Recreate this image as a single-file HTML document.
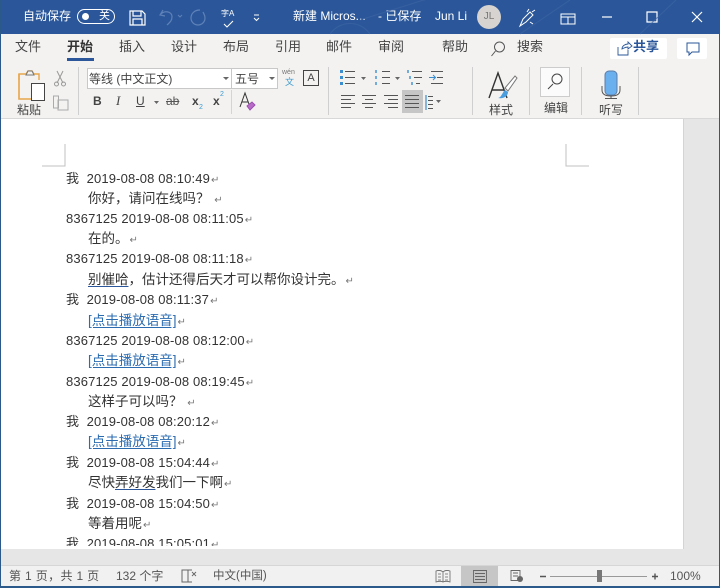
<!DOCTYPE html>
<html lang="zh"><head><meta charset="utf-8"><style>
html,body{margin:0;padding:0;width:720px;height:588px;overflow:hidden;background:#fff}
body{position:relative;font-family:"Liberation Sans","Noto Sans CJK SC",sans-serif;color:#333;filter:blur(.3px)}
.a{position:absolute;white-space:nowrap}
.t{position:absolute;white-space:nowrap;font-size:13px;line-height:16px;color:#444}
.s{font-size:12px}
.l{position:absolute;white-space:nowrap;font-size:13px;line-height:18px;color:#333}
.l i{font-style:normal;font-size:10px;color:#777;margin-left:1px}
.d{left:66px;letter-spacing:.14px}
.c{left:88px;font-size:13.5px}
.k{color:#2b6cb0;text-decoration:underline;text-underline-offset:2px}
.u{text-decoration:underline;text-decoration-color:#2b579a;text-underline-offset:2px}
.w{color:#fff;font-size:12px;line-height:16px;position:absolute;white-space:nowrap}
svg{position:absolute;left:0;top:0}
</style></head><body>
<div class="a" style="left:0;top:0;width:720px;height:34px;background:#2b579a"></div>
<div class="a" style="left:1px;top:34px;width:718px;height:26px;background:#f3f2f1"></div>
<div class="a" style="left:1px;top:60px;width:718px;height:58px;background:#f3f2f1;border-bottom:1px solid #d8d8d8"></div>
<div class="a" style="left:683px;top:119px;width:36px;height:430px;background:#e6e6e6;border-left:1px solid #d4d4d4;box-sizing:border-box"></div>
<div class="a" style="left:1px;top:549px;width:718px;height:17px;background:#e6e6e6"></div>
<div class="a" style="left:1px;top:565px;width:718px;height:21px;background:#f1f1f1;border-top:1px solid #d6d6d6;box-sizing:border-box"></div>
<div class="a" style="left:0;top:0;width:1px;height:588px;background:#2b5a8a"></div>
<div class="a" style="left:719px;top:0;width:1px;height:588px;background:#2b5a8a"></div>
<div class="a" style="left:0;top:586px;width:720px;height:2px;background:#2b5a8a"></div>

<div class="w" style="left:23px;top:8px">自动保存</div>
<div class="a" style="left:77px;top:9px;width:36px;height:13px;border:1px solid #fff;border-radius:8px;box-sizing:content-box"></div>
<div class="a" style="left:82px;top:13px;width:7px;height:7px;background:#fff;border-radius:50%"></div>
<div class="w" style="left:99px;top:8px;font-size:11px">关</div>
<div class="w" style="left:293px;top:8px">新建 Micros...</div>
<div class="w" style="left:378px;top:8px">- 已保存</div>
<div class="w" style="left:435px;top:8px">Jun Li</div>
<div class="a" style="left:477px;top:5px;width:24px;height:24px;border-radius:50%;background:#d6d3d0;color:#777;font-size:10px;line-height:24px;text-align:center">JL</div>
<div class="w" style="left:221px;top:9px;font-size:8px;line-height:9px">字A</div>

<div class="t" style="left:15px;top:39px">文件</div>
<div class="t" style="left:67px;top:39px;font-weight:bold;color:#333">开始</div>
<div class="a" style="left:67px;top:58px;width:27px;height:3px;background:#2b579a"></div>
<div class="t" style="left:119px;top:39px">插入</div>
<div class="t" style="left:171px;top:39px">设计</div>
<div class="t" style="left:223px;top:39px">布局</div>
<div class="t" style="left:275px;top:39px">引用</div>
<div class="t" style="left:326px;top:39px">邮件</div>
<div class="t" style="left:378px;top:39px">审阅</div>
<div class="t" style="left:442px;top:39px">帮助</div>
<div class="t" style="left:517px;top:39px">搜索</div>

<div class="a" style="left:610px;top:38px;width:57px;height:21px;background:#fff;border-radius:2px"></div>
<div class="t" style="left:633px;top:39px;color:#2b579a;font-weight:bold">共享</div>
<div class="a" style="left:677px;top:38px;width:30px;height:21px;background:#fff;border-radius:2px"></div>

<div class="a" style="left:87px;top:68px;width:145px;height:21px;background:#fff;border:1px solid #c8c8c8;box-sizing:border-box"></div>
<div class="a" style="left:232px;top:68px;width:46px;height:21px;background:#fff;border:1px solid #c8c8c8;border-left:0;box-sizing:border-box"></div>
<div class="t s" style="left:89px;top:71px">等线 (中文正文)</div>
<div class="t s" style="left:235px;top:71px">五号</div>
<div class="t s" style="left:17px;top:102px">粘贴</div>
<div class="t s" style="left:93px;top:93px;font-weight:bold">B</div>
<div class="t" style="left:116px;top:93px;font-style:italic;font-family:'Liberation Serif',serif">I</div>
<div class="t s" style="left:136px;top:93px;text-decoration:underline">U</div>
<div class="t s" style="left:166px;top:93px;text-decoration:line-through;color:#555">ab</div>
<div class="t s" style="left:192px;top:93px;font-weight:bold">x</div>
<div class="t" style="left:199px;top:103px;font-size:7px;color:#3a9ad0;line-height:10px">2</div>
<div class="t s" style="left:213px;top:93px;font-weight:bold">x</div>
<div class="t" style="left:220px;top:90px;font-size:7px;color:#3a9ad0;line-height:10px">2</div>
<div class="t" style="left:282px;top:69px;font-size:7px;line-height:8px;color:#777">wén</div>
<div class="t" style="left:285px;top:77px;font-size:9px;line-height:10px;color:#3a9ad0">文</div>
<div class="a" style="left:303px;top:70px;width:16px;height:16px;border:1px solid #444;box-sizing:border-box;font-size:11px;line-height:14px;text-align:center;color:#444">A</div>
<div class="a" style="left:402px;top:90px;width:21px;height:23px;background:#c6c6c6"></div>
<div class="t s" style="left:489px;top:102px">样式</div>
<div class="a" style="left:540px;top:67px;width:30px;height:30px;background:#fbfbfb;border:1px solid #ccc;box-sizing:border-box"></div>
<div class="t s" style="left:544px;top:100px">编辑</div>
<div class="t s" style="left:599px;top:102px">听写</div>

<svg width="720" height="588" viewBox="0 0 720 588" fill="none">
<!-- titlebar icons -->
<g stroke="#fff" stroke-width="1.2">
<path d="M130 11h12l3 3v11h-15z M133 11v5h8v-5 M133 25v-6h9v6"/>
<path d="M561 14h14v10h-14z M561 17h14 M568 17v7" stroke-width="1"/>
<path d="M602 17h10"/>
<path d="M647 12h10v10h-10z"/>
<path d="M692 12l10 10M702 12l-10 10"/>
<path d="M254 15h5M254 18l2.5 2.5 2.5-2.5" stroke-width="1"/>
<path d="M224 24l3 3 6-6" stroke-width="1.1"/>
<path d="M520 26l3-7 7-7 3 3-7 7z M527 12l2-3M532 12l3-2M530 22l3 2" stroke-width="1"/>
</g>
<g stroke="#5f82b8" stroke-width="1.2">
<path d="M163 10l-3 5 5 1M160 15c4-5 12-4 12 2 0 4-3 6-5 8"/>
<path d="M178 15l2 2 2-2" stroke-width="1"/>
<path d="M200 10c-6 0-9 4-9 8a7 7 0 1 0 14 0c0-3-1-4-2-6"/>
</g>
<g stroke="#3d64a3" stroke-width="1" opacity=".7">
<path d="M360 20l70-22M520 34l50-34M640 34l36-34M330 34c10-14 30-14 40 0"/>
</g>
<!-- clipboard -->
<path d="M19 80V74h7l2-3h4l2 3h5v6" stroke="#e8a64a" stroke-width="1.4"/>
<path d="M19 74v25h12" stroke="#e8a64a" stroke-width="1.6"/>
<path d="M26 75l2-4h4l2 4z" stroke="#777" fill="#f3f2f1"/>
<rect x="31.500" y="83.500" width="13" height="17" fill="#fff" stroke="#444"/>
<path d="M57 71l6 12M63 71l-6 12" stroke="#999"/>
<circle cx="56.500" cy="84" r="2" stroke="#999"/><circle cx="63.500" cy="84" r="2" stroke="#999"/>
<path d="M53.500 96h5v12h-5z M58 100h10v10H58z" stroke="#aaa" fill="#f3f2f1"/>
<path d="M78.500 67v48M328.500 67v48M472.500 67v48M529.500 67v48M581.500 67v48M638.500 67v48" stroke="#cfcfcf"/>
<path d="M231.500 90v24" stroke="#d4d4d4"/>
<path d="M223 77l3 3 3-3M269 77l3 3 3-3M154 101l2.500 3 2.500-3M361 77l2.500 3 2.500-3M395 77l2.500 3 2.500-3M436 100l2.500 3 2.500-3" fill="#666"/>
<path d="M240 107l5-14 5 14M242 102h6" stroke="#333" stroke-width="1"/>
<path d="M247 106l5-4 3 3-5 5z" fill="#b86cc8" stroke="#9a4fb0"/>
<!-- lists -->
<g fill="#3a8ed0"><rect x="340" y="70" width="3" height="3"/><rect x="340" y="76" width="3" height="3"/><rect x="340" y="82" width="3" height="3"/></g>
<path d="M345 71.500h10M345 77.500h10M345 83.500h10M382 71.500h8M382 77.500h8M382 83.500h8M412 71.500h10M414 77.500h8M416 83.500h4M431 71.500h12M437 77.500h6M431 83.500h12" stroke="#555"/>
<path d="M376 70v3M376 76v3M376 82v3M408 70v3M410 76v3M412 82v3" stroke="#3a8ed0" stroke-width="1.4"/>
<path d="M429 77.500h6M433 75l2.500 2.500-2.500 2.500" stroke="#3a8ed0"/>
<path d="M341 95.500h14M341 99.500h10M341 103.500h14M341 107.500h10M362 95.500h14M365 99.500h8M362 103.500h14M365 107.500h8M384 95.500h14M388 99.500h10M384 103.500h14M388 107.500h10M405 95.500h14M405 99.500h14M405 103.500h14M405 107.500h14" stroke="#555" stroke-width="1.1"/>
<path d="M426 95v15" stroke="#3a8ed0" stroke-width="1.2"/><path d="M428 96.500h5M428 100.500h5M428 104.500h5M428 108.500h5" stroke="#555"/>
<!-- styles -->
<path d="M489 98l9-25 9 25M492 90h12" stroke="#333" stroke-width="1.4"/>
<path d="M505 88l10-12 2 2-9 13z" stroke="#777" fill="#fff"/>
<path d="M498 98c3 0 4-5 7-8l3 2c0 4-4 7-10 6z" fill="#4a9ede"/>
<!-- editing -->
<circle cx="557" cy="79" r="5" stroke="#444" fill="#fbfbfb"/><path d="M553 84l-5 5" stroke="#444"/>
<!-- dictate -->
<rect x="605" y="71" width="12" height="24" rx="4" fill="#6ab0ee" stroke="#5c7da8"/>
<path d="M602 86v4c0 4 3 6 9 6s9-2 9-6v-4M611 96v2M605 98.500h12" stroke="#555" stroke-width="1"/>
<!-- search -->
<circle cx="499.500" cy="47" r="5" stroke="#555"/><path d="M495.500 51l-4 5" stroke="#555"/>
<!-- share -->
<path d="M618 47v8h10v-5M622 49c0-3 3-5 6-5v-2l4 4-4 3v-2c-3 0-4 1-6 2z" stroke="#2b579a" stroke-width=".9"/>
<path d="M687 43h12v9h-7l-3 3v-3h-2z" stroke="#2b579a"/>
<!-- crop marks -->
<path d="M65 144v22H42M566 144v22h23" stroke="#c0c0c0"/>
<!-- status -->
<path d="M182 570h6v12h-6zM188 570h4M188 582h4" stroke="#666"/><path d="M192 572l4 4M196 572l-4 4" stroke="#666" stroke-width=".9"/>
<rect x="461" y="566" width="37" height="20" fill="#c6c6c6"/>
<path d="M436 571c3-1 5-1 7 1 2-2 4-2 7-1v11c-3-1-5-1-7 0-2-1-4-1-7 0zM443 572v10M438 574h3M438 577h3M438 580h3M445 574h3M445 577h3M445 580h3" stroke="#666" stroke-width=".8"/>
<path d="M473.500 570.500h13v12h-13zM475 573.500h10M475 576.500h10M475 579.500h10" stroke="#666" stroke-width=".9"/>
<path d="M511 570.500h9v10h-9zM513 573h5M513 576h5" stroke="#666" stroke-width=".9"/><circle cx="520" cy="579" r="3" fill="#666"/>
<path d="M550 576.500h97" stroke="#999"/>
<rect x="597" y="570" width="5" height="12" fill="#777"/>
<path d="M540 576.500h6M652 576.500h6M655 573.500v6" stroke="#555" stroke-width="1.4"/>
</svg>

<div class="l d" style="top:170px">我&nbsp; 2019-08-08 08:10:49<i>↵</i></div>
<div class="l c" style="top:190px">你好，请问在线吗？ <i>↵</i></div>
<div class="l d" style="top:210px">8367125 2019-08-08 08:11:05<i>↵</i></div>
<div class="l c" style="top:230px">在的。<i>↵</i></div>
<div class="l d" style="top:250px">8367125 2019-08-08 08:11:18<i>↵</i></div>
<div class="l c" style="top:271px"><span class="u">别催哈</span>，估计还得后天才可以帮你设计完。<i>↵</i></div>
<div class="l d" style="top:291px">我&nbsp; 2019-08-08 08:11:37<i>↵</i></div>
<div class="l c" style="top:312px"><span class="k">[点击播放语音]</span><i>↵</i></div>
<div class="l d" style="top:332px">8367125 2019-08-08 08:12:00<i>↵</i></div>
<div class="l c" style="top:352px"><span class="k">[点击播放语音]</span><i>↵</i></div>
<div class="l d" style="top:373px">8367125 2019-08-08 08:19:45<i>↵</i></div>
<div class="l c" style="top:393px">这样子可以吗？ <i>↵</i></div>
<div class="l d" style="top:413px">我&nbsp; 2019-08-08 08:20:12<i>↵</i></div>
<div class="l c" style="top:433px"><span class="k">[点击播放语音]</span><i>↵</i></div>
<div class="l d" style="top:454px">我&nbsp; 2019-08-08 15:04:44<i>↵</i></div>
<div class="l c" style="top:474px">尽快<span class="u">弄好发</span>我们一下啊<i>↵</i></div>
<div class="l d" style="top:495px">我&nbsp; 2019-08-08 15:04:50<i>↵</i></div>
<div class="l c" style="top:515px">等着用呢<i>↵</i></div>
<div class="a" style="left:1px;top:530px;width:682px;height:16px;overflow:hidden">
<div class="l d" style="left:65px;top:5px">我&nbsp; 2019-08-08 15:05:01<i>↵</i></div></div>

<div class="t s" style="left:9px;top:568px;color:#555;letter-spacing:.35px">第 1 页，共 1 页</div>
<div class="t s" style="left:116px;top:568px;color:#555">132 个字</div>
<div class="t" style="left:213px;top:568px;font-size:11.5px;color:#555">中文(中国)</div>
<div class="t s" style="left:670px;top:568px;color:#555">100%</div>
</body></html>
